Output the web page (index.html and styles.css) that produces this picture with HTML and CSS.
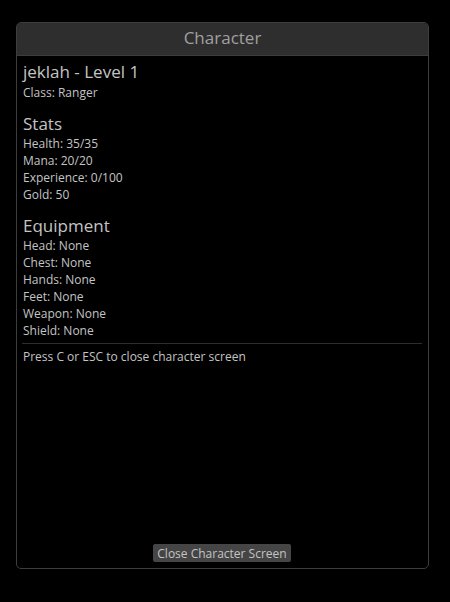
FILE: index.html
```html
<!DOCTYPE html>
<html>
<head>
<meta charset="utf-8">
<link rel="stylesheet" href="styles.css">
</head>
<body>
<div class="panel">
  <div class="header">Character</div>
  <div class="content">
    <div class="name">jeklah - Level 1</div>
    <div class="line">Class: Ranger</div>
    <div class="section">Stats</div>
    <div class="line">Health: 35/35</div>
    <div class="line">Mana: 20/20</div>
    <div class="line">Experience: 0/100</div>
    <div class="line">Gold: 50</div>
    <div class="section">Equipment</div>
    <div class="line">Head: None</div>
    <div class="line">Chest: None</div>
    <div class="line">Hands: None</div>
    <div class="line">Feet: None</div>
    <div class="line">Weapon: None</div>
    <div class="line">Shield: None</div>
    <div class="sep"></div>
    <div class="line">Press C or ESC to close character screen</div>
  </div>
  <div class="footer"><button class="btn">Close Character Screen</button></div>
</div>
</body>
</html>
```
FILE: styles.css
```css
html, body {
  margin: 0;
  background: #000;
  height: 100%;
}
body {
  font-family: "Open Sans", "DejaVu Sans", sans-serif;
  color: #c4c4c4;
}
.panel {
  margin: 22px 0 0 16px;
  width: 413px;
  height: 547px;
  box-sizing: border-box;
  border: 1px solid #3d3d3d;
  border-radius: 5px;
  display: flex;
  flex-direction: column;
  overflow: hidden;
}
.header {
  height: 33px;
  box-sizing: border-box;
  padding-bottom: 3px;
  background: #2e2e2e;
  border-bottom: 1px solid #3d3d3d;
  color: #a0a0a0;
  font-size: 17px;
  display: flex;
  align-items: center;
  justify-content: center;
}
.content {
  flex: 1;
  padding: 5px 6px 0 6px;
}
.name {
  font-size: 17px;
  line-height: 22px;
  margin-bottom: 1px;
}
.section {
  font-size: 17px;
  line-height: 22px;
  margin-top: 12px;
}
.line {
  font-size: 12px;
  line-height: 17px;
}
.sep {
  height: 1px;
  background: #2e2e2e;
  margin: 4px 0 4px -1px;
}
.footer {
  display: flex;
  justify-content: center;
  padding-bottom: 6px;
}
.btn {
  font-family: inherit;
  font-size: 12px;
  color: #c4c4c4;
  background: #454545;
  border: none;
  border-radius: 2px;
  height: 18px;
  padding: 0 4px;
  margin-right: 1px;
}
```
